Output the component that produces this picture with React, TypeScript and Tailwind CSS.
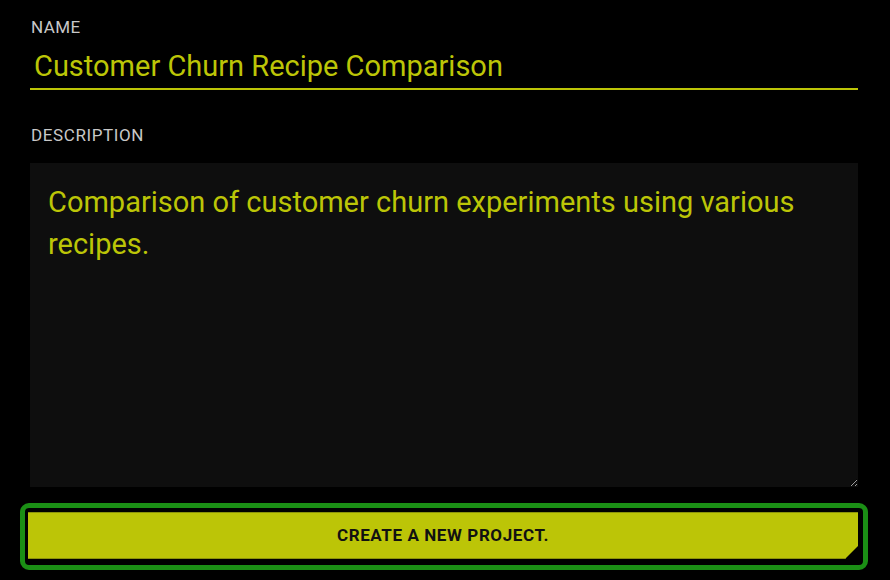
import React from "react";

export default function App() {
  return (
    <div
      className="w-[890px] h-[580px] bg-black overflow-hidden"
      style={{ fontFamily: "Roboto, 'Noto Sans', sans-serif" }}
    >
      <div className="pl-[30px] pr-[32px] pt-[17px]">
        <div className="pl-[1px] text-[17px] tracking-[0.4px] leading-[20px] text-[#c8c8c8]">NAME</div>
        <div className="mt-[11px] border-b-2 border-[#bcc507] pb-[4px]">
          <input
            readOnly
            defaultValue="Customer Churn Recipe Comparison"
            className="block w-full h-[36px] bg-transparent pl-[4px] text-[29px] leading-[36px] text-[#bcc507] outline-none"
          />
        </div>
        <div className="mt-[35px] pl-[1px] text-[17px] tracking-[0.6px] leading-[20px] text-[#c8c8c8]">DESCRIPTION</div>
        <textarea
          readOnly
          defaultValue="Comparison of customer churn experiments using various recipes."
          className="mt-[18px] block w-[828px] h-[324px] bg-[#0e0e0e] p-[18px] text-[29px] leading-[42px] text-[#bcc507] outline-none"
        />
      </div>
      <div className="ml-[20px] mt-[16px] w-[848px] rounded-[9px] border-[5px] border-[#1b8f15] pt-[4px] pl-[3px] pr-[5px] pb-[6px]">
        <button
          className="block w-full h-[47px] bg-[#bcc507] border-y border-[#8d940a] text-[17px] font-bold tracking-[0.6px] text-[#111]"
          style={{ clipPath: "polygon(0 0, 100% 0, 100% calc(100% - 13px), calc(100% - 13px) 100%, 0 100%)" }}
        >
          CREATE A NEW PROJECT.
        </button>
      </div>
    </div>
  );
}
